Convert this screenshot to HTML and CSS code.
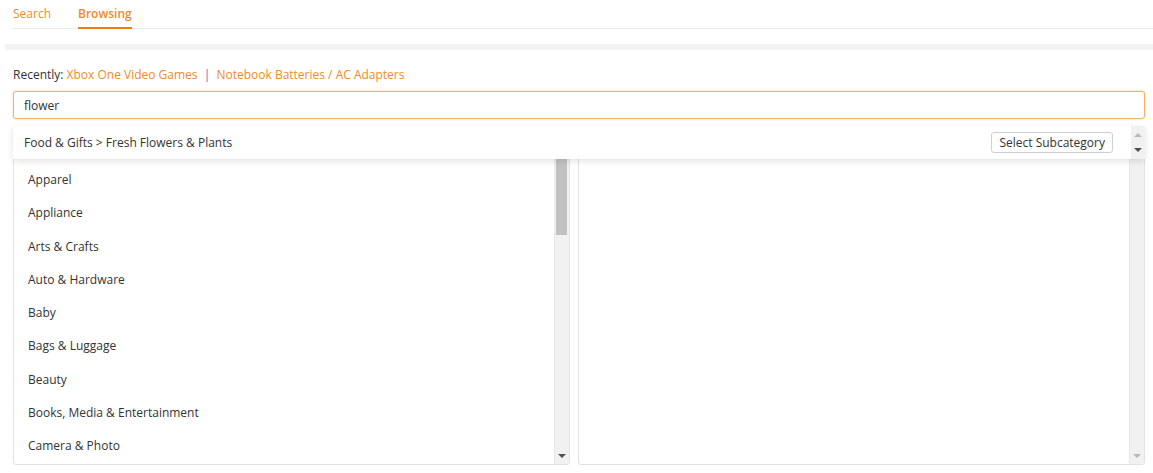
FILE: index.html
```html
<!DOCTYPE html>
<html>
<head>
<meta charset="utf-8">
<link rel="stylesheet" href="styles.css">
</head>
<body>
<div class="tabs">
  <div class="tab">Search</div>
  <div class="tab active">Browsing</div>
</div>
<div class="band"></div>
<div class="content">
  <div class="recent">Recently: <a class="link">Xbox One Video Games</a> <span class="sep">|</span> <a class="link">Notebook Batteries / AC Adapters</a></div>
  <div class="search-wrap">
    <div class="search-input">flower</div>
    <div class="dropdown">
      <div class="dd-row">
        <span class="dd-text">Food &amp; Gifts &gt; Fresh Flowers &amp; Plants</span>
        <span class="dd-btn">Select Subcategory</span>
      </div>
      <div class="dd-scroll">
        <span class="arrow-up light"></span>
        <span class="arrow-down"></span>
      </div>
    </div>
    <div class="panels">
      <div class="panel">
        <ul class="list">
          <li>Apparel</li>
          <li>Appliance</li>
          <li>Arts &amp; Crafts</li>
          <li>Auto &amp; Hardware</li>
          <li>Baby</li>
          <li>Bags &amp; Luggage</li>
          <li>Beauty</li>
          <li>Books, Media &amp; Entertainment</li>
          <li>Camera &amp; Photo</li>
        </ul>
        <div class="vscroll">
          <div class="thumb"></div>
          <span class="arrow-down"></span>
        </div>
      </div>
      <div class="panel">
        <div class="list"></div>
        <div class="vscroll">
          <div class="spacer"></div>
          <span class="arrow-down light"></span>
        </div>
      </div>
    </div>
  </div>
</div>
</body>
</html>
```
FILE: styles.css
```css
* { box-sizing: border-box; }
body {
  margin: 0;
  font-family: "Open Sans", "Noto Sans", sans-serif;
  font-size: 12px;
  color: #333;
  background: #fff;
}
.tabs {
  display: flex;
  gap: 27px;
  margin-left: 13px;
  height: 29px;
  border-bottom: 1px solid #ebebeb;
}
.tab {
  color: #ef8a2a;
  font-size: 12px;
  line-height: 28px;
}
.tab.active {
  font-weight: 600;
  border-bottom: 2px solid #f07e0c;
  height: 29px;
}
.band {
  margin: 15px 0 0 5px;
  height: 6px;
  background: #f3f3f3;
}
.content {
  padding: 0 8px 0 13px;
}
.recent {
  margin-top: 17px;
  line-height: 16px;
  color: #333;
}
.link { color: #ef8a2a; }
.sep { color: #8e5ea2; margin: 0 3px; }
.search-wrap {
  position: relative;
  margin-top: 8px;
}
.search-input {
  height: 28px;
  border: 1px solid #f5b06a;
  border-radius: 3px;
  box-shadow: 0 0 2px rgba(245, 160, 80, 0.6);
  padding: 1px 10px 0;
  line-height: 26px;
  color: #333;
}
.dropdown {
  position: absolute;
  top: 35px;
  left: 0;
  right: 0;
  height: 33px;
  background: #fff;
  box-shadow: 0 2px 6px rgba(0, 0, 0, 0.12);
  display: flex;
  z-index: 2;
}
.dd-row {
  flex: 1;
  display: flex;
  align-items: center;
  justify-content: space-between;
  padding: 0 18px 0 11px;
}
.dd-btn {
  border: 1px solid #cfcfcf;
  border-radius: 3px;
  padding: 0 7px;
  line-height: 19px;
  color: #333;
  background: #fff;
}
.dd-scroll {
  width: 14px;
  background: #f1f1f1;
  display: flex;
  flex-direction: column;
  align-items: center;
  justify-content: space-between;
  padding: 7px 0 7px;
}
.arrow-up, .arrow-down {
  width: 0;
  height: 0;
  border-left: 4px solid transparent;
  border-right: 4px solid transparent;
}
.arrow-up { border-bottom: 4px solid #505050; }
.arrow-down { border-top: 4px solid #505050; }
.arrow-up.light { border-bottom-color: #b8b8b8; }
.arrow-down.light { border-top-color: #b8b8b8; }
.panels {
  display: grid;
  grid-template-columns: 557px 1fr;
  gap: 8px;
  margin-top: 8px;
}
.panel {
  height: 338px;
  border: 1px solid #e2e2e2;
  border-radius: 3px;
  display: flex;
  overflow: hidden;
}
.list {
  flex: 1;
  list-style: none;
  margin: 0;
  padding: 35px 0 0 0;
}
.list li {
  height: 33.25px;
  line-height: 33.25px;
  padding-left: 14px;
  color: #333;
}
.vscroll {
  width: 15px;
  background: #f1f1f1;
  border-left: 1px solid #e8e8e8;
  display: flex;
  flex-direction: column;
  align-items: center;
  padding-bottom: 6px;
}
.thumb {
  width: 11px;
  height: 90px;
  margin-top: 17px;
  background: #c1c1c1;
  margin-left: -1px;
}
.vscroll .arrow-down { margin-top: auto; }
.spacer { flex: 1; }
```
